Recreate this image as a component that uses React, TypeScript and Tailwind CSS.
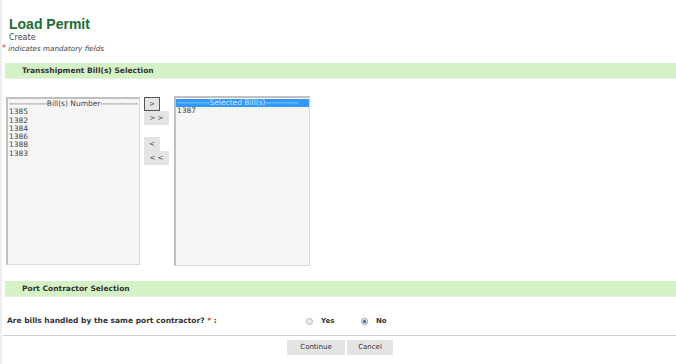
const available = ['1385', '1382', '1384', '1386', '1388', '1383'];
const selected = ['1387'];

const SectionBar = ({ title }: { title: string }) => (
  <div className="ml-[3px] h-[16px] bg-[#d5f1c6] border-b border-[#e6f3de] flex items-center pl-[17px] text-[7.5px] font-bold text-[#333]">
    {title}
  </div>
);

const MoveButton = ({ label, wide, focused }: { label: string; wide?: boolean; focused?: boolean }) => (
  <button
    className={`${wide ? 'w-[25px]' : 'w-[16px]'} h-[14px] bg-[#e4e4e4] text-[7px] text-[#444] flex items-center justify-center ${
      focused ? 'border border-[#555]' : 'border border-[#e4e4e4]'
    }`}
  >
    {label}
  </button>
);

export default function App() {
  return (
    <div className="w-[676px] h-[364px] bg-white font-['DejaVu_Sans',sans-serif] text-[#333] overflow-hidden border-l-2 border-[#eeeeee]">
      <div className="pl-[7px] pt-[15px]">
        <div className="text-[14px] leading-[18px] font-bold text-[#1c6b38] font-['Liberation_Sans',sans-serif]">Load Permit</div>
        <div className="text-[8px] leading-[10px] text-[#444]">Create</div>
        <div className="text-[7.2px] leading-[11px] italic text-[#444] -ml-[7px]">
          <span className="text-[#e0302f] not-italic text-[8px]">*</span> indicates mandatory fields
        </div>
      </div>

      <div className="mt-[9px]">
        <SectionBar title="Transshipment Bill(s) Selection" />
      </div>

      <div className="flex items-start mt-[18px] pl-[4px]">
        <div className="w-[134px] h-[168px] bg-[#f6f6f6] border border-[#dadada] border-t-[2px] border-l-[2px] border-t-[#c0c0c0] border-l-[#c0c0c0] pt-[1px] text-[7.5px] leading-[8.3px] text-[#444]">
          <div className="text-center whitespace-nowrap overflow-hidden">--------------Bill(s) Number--------------</div>
          {available.map((b) => (
            <div key={b} className="pl-[1px]">{b}</div>
          ))}
        </div>

        <div className="ml-[4px] flex flex-col">
          <MoveButton label=">" focused />
          <MoveButton label="> >" wide />
          <div className="h-[12px]" />
          <MoveButton label="<" />
          <MoveButton label="< <" wide />
        </div>

        <div className="ml-[5px] -mt-[1px] w-[136px] h-[170px] bg-[#f6f6f6] border border-[#dadada] border-t-[2px] border-l-[2px] border-t-[#c0c0c0] border-l-[#c0c0c0] pt-[1px] text-[7.5px] leading-[8.3px] text-[#444]">
          <div className="bg-[#3399ff] text-[#cfe6ff] whitespace-nowrap overflow-hidden pl-[1px]">------------Selected Bill(s)------------</div>
          {selected.map((b) => (
            <div key={b} className="pl-[1px]">{b}</div>
          ))}
        </div>
      </div>

      <div className="mt-[15px]">
        <SectionBar title="Port Contractor Selection" />
      </div>

      <div className="flex items-center h-[14px] mt-[17px] pl-[5px] text-[7.5px] font-bold text-[#333]">
        <div className="w-[299px]">
          Are bills handled by the same port contractor? <span className="text-[#e0302f]">*</span> :
        </div>
        <div className="flex items-center text-[7px]">
          <span className="w-[7px] h-[7px] rounded-full border border-[#b5b5b5] bg-[#eeeeee]" />
          <span className="ml-[8px] w-[40px]">Yes</span>
          <span className="w-[7px] h-[7px] rounded-full border border-[#8a9bb0] bg-[#e6eef7] flex items-center justify-center">
            <span className="w-[3px] h-[3px] rounded-full bg-[#2d5f97]" />
          </span>
          <span className="ml-[8px]">No</span>
        </div>
      </div>

      <div className="mt-[7px] ml-[1px] border-t border-[#cfcfcf]" />

      <div className="flex justify-center gap-[2px] mt-[4px] pl-[2px]">
        <button className="w-[58px] h-[15px] bg-[#e4e4e4] text-[7px] text-[#333]">Continue</button>
        <button className="w-[46px] h-[15px] bg-[#e4e4e4] text-[7px] text-[#333]">Cancel</button>
      </div>
    </div>
  );
}
